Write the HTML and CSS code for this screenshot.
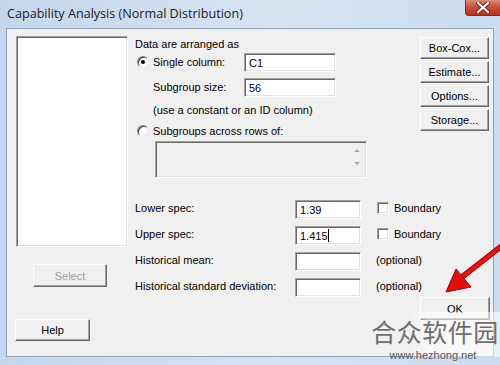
FILE: index.html
```html
<!DOCTYPE html>
<html lang="en">
<head>
<meta charset="UTF-8" />
<title>Capability Analysis (Normal Distribution)</title>
<link rel="stylesheet" href="styles.css">
</head>
<body>
<div class="window">

  <div class="titlebar">
    <span class="title">Capability Analysis (Normal Distribution)</span>
    <div class="close-btn">
      <svg width="14" height="11" viewBox="0 0 14 11">
        <path d="M2 1 L12 10 M12 1 L2 10" stroke="#6a2a20" stroke-width="4" stroke-linecap="round"/>
        <path d="M2 1 L12 10 M12 1 L2 10" stroke="#fff" stroke-width="2.2" stroke-linecap="round"/>
      </svg>
    </div>
  </div>

  <div class="client">

    <div class="col-left">
      <div class="listbox"></div>
      <button class="btn btn-select" disabled>Select</button>
      <button class="btn btn-help">Help</button>
    </div>

    <div class="col-mid">
      <div class="caption">Data are arranged as</div>

      <div class="opt-row">
        <span class="radio checked"></span>
        <span class="opt-label">Single column:</span>
        <div class="field wide">C1</div>
      </div>
      <div class="opt-row sub">
        <span class="opt-label">Subgroup size:</span>
        <div class="field wide">56</div>
      </div>
      <div class="hint">(use a constant or an ID column)</div>

      <div class="opt-row radio-row">
        <span class="radio"></span>
        <span class="opt-label">Subgroups across rows of:</span>
      </div>
      <div class="rows-box">
        <div class="scroll-arrows">
          <span class="arr up"></span>
          <span class="arr down"></span>
        </div>
      </div>

      <div class="spec-grid">
        <span class="spec-label">Lower spec:</span>
        <div class="field">1.39</div>
        <label class="check"><span class="box"></span>Boundary</label>

        <span class="spec-label">Upper spec:</span>
        <div class="field">1.415<span class="caret"></span></div>
        <label class="check"><span class="box"></span>Boundary</label>

        <span class="spec-label">Historical mean:</span>
        <div class="field"></div>
        <span class="note">(optional)</span>

        <span class="spec-label">Historical standard deviation:</span>
        <div class="field"></div>
        <span class="note">(optional)</span>
      </div>
    </div>

    <div class="col-right">
      <button class="btn side">Box-Cox...</button>
      <button class="btn side">Estimate...</button>
      <button class="btn side">Options...</button>
      <button class="btn side">Storage...</button>
      <button class="btn side btn-ok">OK</button>
    </div>

  </div>

  <div class="wm-fade"></div>
  <div class="watermark">
    <div class="wm-name">合众软件园</div>
    <div class="wm-url">www.hezhong.net</div>
  </div>

  <svg class="arrow" width="500" height="365" viewBox="0 0 500 365">
    <path d="M503 245 L462 277" stroke="#9a0000" stroke-width="5.5" stroke-linecap="round"/>
    <path d="M503 245 L462 277" stroke="#ee1111" stroke-width="3.5" stroke-linecap="round"/>
    <polygon points="446,292 456,269 471,287" fill="#e01010" stroke="#a00000" stroke-width="1"/>
  </svg>

</div>
</body>
</html>
```

FILE: styles.css
```css
* { box-sizing: border-box; }
html, body {
  margin: 0; padding: 0;
  width: 500px; height: 365px;
  overflow: hidden;
  background: #fff;
}

.window {
  position: relative;
  width: 500px;
  height: 365px;
  background: linear-gradient(to right, #c3d6ec, #d7e4f3 55%, #cadcf0);
  font-family: "Liberation Sans", Arial, sans-serif;
  font-size: 11px;
  color: #000;
  display: flex;
  flex-direction: column;
}

.titlebar {
  height: 28px;
  display: flex;
  align-items: flex-start;
  flex-shrink: 0;
}

.title {
  padding: 5px 0 0 7px;
  font-family: "Open Sans", "Liberation Sans", sans-serif;
  font-size: 12.6px;
  color: #1b1b1b;
}

.close-btn {
  margin-left: auto;
  width: 35px;
  height: 16px;
  background: linear-gradient(#dd8a7c, #c9503b 45%, #b83520);
  border: 1px solid #7d2a1d;
  border-top: none;
  border-right: none;
  border-radius: 0 0 0 4px;
  display: flex;
  align-items: center;
  justify-content: center;
}

.client {
  flex: 1;
  margin: 0 6px 8px 6px;
  background: #f0f0f0;
  border: 1px solid #8ea3bb;
  display: flex;
}

/* left column */
.col-left {
  width: 128px;
  padding-left: 9px;
  display: flex;
  flex-direction: column;
  align-items: flex-start;
}

.listbox {
  margin-top: 7px;
  width: 112px;
  height: 211px;
  background: #fff;
  border: 1px solid;
  border-color: #a0a0a0 #fff #fff #a0a0a0;
  box-shadow: inset 1px 1px 0 #696969, inset -1px -1px 0 #e3e3e3;
}

.btn {
  font-family: "Liberation Sans", Arial, sans-serif;
  font-size: 11px;
  color: #000;
  background: #f0f0f0;
  border: 1px solid;
  border-color: #fff #696969 #696969 #fff;
  box-shadow: inset -1px -1px 0 #a0a0a0;
  padding: 0;
  width: 69px;
  height: 22px;
}

.btn-select {
  margin: 17px 0 0 17px;
  width: 74px;
  height: 23px;
  color: #a0a0a0;
}

.btn-help {
  margin: 32px 0 0 -1px;
  width: 75px;
}

/* middle column */
.col-mid {
  width: 285px;
}

.caption {
  margin-top: 8px;
  line-height: 14px;
}

.opt-row {
  display: flex;
  align-items: center;
  height: 20px;
  margin-top: 1px;
}

.opt-row.sub {
  margin-top: 5px;
  padding-left: 18px;
}

.opt-row.radio-row {
  height: 14px;
  margin-top: 7px;
}

.radio {
  width: 12px;
  height: 12px;
  margin: 0 4px 0 2px;
  border-radius: 50%;
  background: #fff;
  border: 1px solid;
  border-color: #808080 #e8e8e8 #e8e8e8 #808080;
  box-shadow: inset 1px 1px 0 #404040;
  display: flex;
  align-items: center;
  justify-content: center;
}

.radio.checked::after {
  content: "";
  width: 4px;
  height: 4px;
  border-radius: 50%;
  background: #000;
}

.opt-label {
  width: 91px;
  white-space: nowrap;
}

.field {
  width: 66px;
  height: 19px;
  background: #fff;
  border: 1px solid;
  border-color: #a0a0a0 #fff #fff #a0a0a0;
  box-shadow: inset 1px 1px 0 #696969, inset -1px -1px 0 #e3e3e3;
  padding: 2px 0 0 4px;
  line-height: 14px;
  white-space: nowrap;
}

.field.wide {
  width: 92px;
}

.caret {
  display: inline-block;
  width: 1px;
  height: 13px;
  background: #000;
  vertical-align: -2px;
}

.hint {
  margin-top: 6px;
  padding-left: 18px;
  line-height: 14px;
}

.rows-box {
  margin: 3px 0 0 20px;
  width: 212px;
  height: 37px;
  border: 1px solid;
  border-color: #a0a0a0 #fff #fff #a0a0a0;
  box-shadow: inset 1px 1px 0 #696969, inset -1px -1px 0 #e3e3e3;
  display: flex;
  justify-content: flex-end;
}

.scroll-arrows {
  width: 19px;
  padding-top: 7px;
  display: flex;
  flex-direction: column;
  align-items: center;
  gap: 10px;
}

.arr {
  width: 0;
  height: 0;
  border-left: 3px solid transparent;
  border-right: 3px solid transparent;
}

.arr.up { border-bottom: 3px solid #a8a8a8; }
.arr.down { border-top: 3px solid #a8a8a8; }

.spec-grid {
  margin-top: 22px;
  display: grid;
  grid-template-columns: 160px 66px auto;
  grid-auto-rows: 19px;
  row-gap: 7px;
  align-items: center;
}

.spec-label {
  white-space: nowrap;
  margin-top: -3px;
}

.check {
  display: flex;
  align-items: center;
  margin-left: 16px;
  margin-top: -3px;
}

.check .box {
  width: 12px;
  height: 12px;
  margin-right: 5px;
  background: #fff;
  border: 1px solid;
  border-color: #a0a0a0 #fff #fff #a0a0a0;
  box-shadow: inset 1px 1px 0 #696969, inset -1px -1px 0 #e3e3e3;
}

.note {
  margin-left: 15px;
  margin-top: -3px;
}

/* right column */
.col-right {
  display: flex;
  flex-direction: column;
  padding-top: 8px;
  gap: 2px;
}

.btn-ok {
  margin-top: 164px;
  width: 70px;
  height: 23px;
}

/* overlays */
.wm-fade {
  position: absolute;
  left: 410px;
  top: 312px;
  width: 90px;
  height: 45px;
  background: linear-gradient(to right, rgba(255,255,255,0), rgba(255,255,255,0.55) 20%);
}

.watermark {
  position: absolute;
  left: 371px;
  top: 315px;
  width: 128px;
  display: flex;
  flex-direction: column;
  align-items: center;
}

.wm-name {
  font-family: "Noto Sans CJK SC", sans-serif;
  font-size: 25px;
  line-height: 32px;
  color: #6e6e6e;
  letter-spacing: 0.5px;
}

.wm-url {
  margin-top: 2px;
  margin-left: -4px;
  font-family: "Liberation Sans", Arial, sans-serif;
  font-size: 11px;
  line-height: 12px;
  color: #555;
}

.arrow {
  position: absolute;
  left: 0;
  top: 0;
  pointer-events: none;
}
```
